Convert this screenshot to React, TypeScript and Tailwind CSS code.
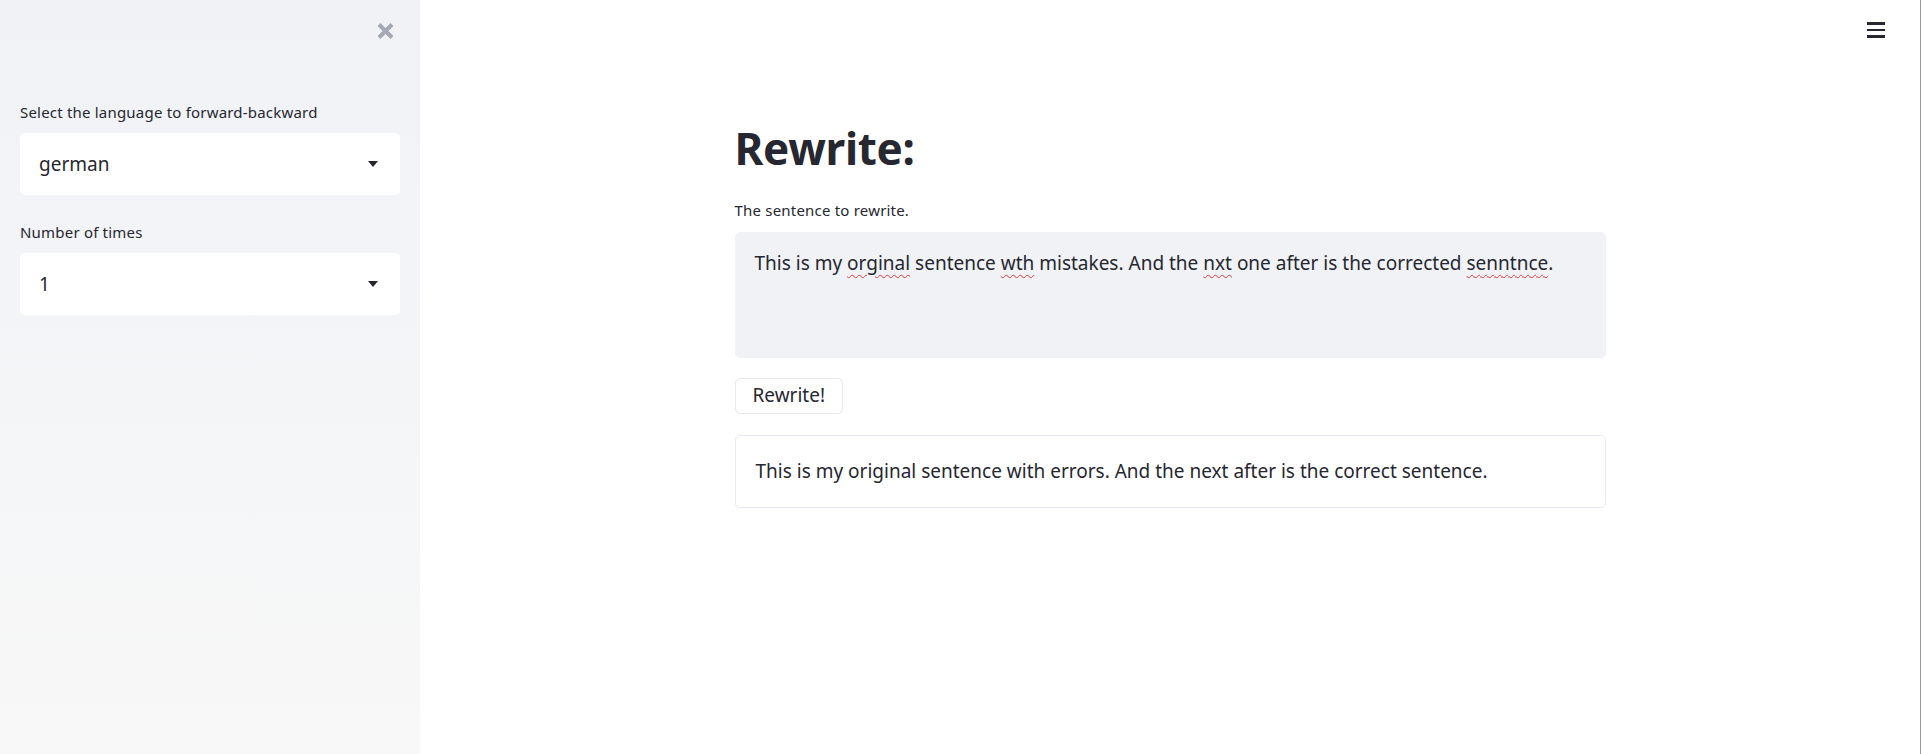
import React from "react";

const font = { fontFamily: '"Noto Sans", "Open Sans", sans-serif' };

function Caret() {
  return (
    <svg width="10" height="6" viewBox="0 0 10 6" className="shrink-0">
      <path d="M0 0h10L5 6z" fill="#262730" />
    </svg>
  );
}

function SelectBox({ label, value }: { label: string; value: string }) {
  return (
    <div className="flex flex-col">
      <label className="text-[15px] tracking-[0.2px] leading-5 text-[#262730] mb-[11px]">{label}</label>
      <div className="h-[62px] bg-white rounded-[5px] flex items-center justify-between pl-[19px] pr-[22px]">
        <span className="text-[19px] text-[#262730]">{value}</span>
        <Caret />
      </div>
    </div>
  );
}

function Typo({ children }: { children: React.ReactNode }) {
  return (
    <span className="underline decoration-wavy decoration-[#e53935] decoration-1 underline-offset-[4px]">
      {children}
    </span>
  );
}

export default function App() {
  return (
    <div className="flex w-full h-screen bg-white text-[#262730]" style={font}>
      {/* sidebar */}
      <aside className="w-[420px] shrink-0 h-full bg-linear-to-b from-[#f0f2f6] to-[#f8f8f8] px-5">
        <div className="flex justify-end pt-[22px] pr-[5px]">
          <svg width="19" height="18" viewBox="0 0 19 18">
            <path d="M3 2.5l13 13M16 2.5l-13 13" stroke="#a3a8b4" strokeWidth="4" strokeLinecap="butt" />
          </svg>
        </div>
        <div className="flex flex-col gap-[27px] mt-[62px]">
          <SelectBox label="Select the language to forward-backward" value="german" />
          <SelectBox label="Number of times" value="1" />
        </div>
      </aside>

      {/* main */}
      <main className="flex-1 h-full flex flex-col border-r border-[#9c9a96]">
        <div className="flex justify-end pt-[22px] pr-[35px]">
          <div className="w-[18px] flex flex-col gap-[4px]">
            <div className="h-[2.5px] bg-[#262730]" />
            <div className="h-[2.5px] bg-[#262730]" />
            <div className="h-[2.5px] bg-[#262730]" />
          </div>
        </div>
        <div className="w-[871px] mx-auto mt-[80px] flex flex-col">
          <h1 className="text-[44px] leading-[60px] font-bold text-[#262730] tracking-[-0.3px]">Rewrite:</h1>
          <label className="text-[15px] tracking-[0.2px] leading-5 mt-[22px] mb-[12px]">The sentence to rewrite.</label>
          <div className="h-[126px] bg-[#f0f2f6] rounded-[5px] px-5 pt-[17px] text-[19px] leading-7">
            This is my <Typo>orginal</Typo> sentence <Typo>wth</Typo> mistakes. And the <Typo>nxt</Typo> one after
            is the corrected <Typo>senntnce</Typo>.
          </div>
          <div className="mt-[20px]">
            <button className="h-[36px] px-[17px] bg-white border border-[#e6e9ef] rounded-[5px] text-[19px] text-[#262730]">
              Rewrite!
            </button>
          </div>
          <div className="mt-[21px] h-[73px] border border-[#e6e9ef] rounded-[5px] px-5 flex items-center text-[19px]">
            This is my original sentence with errors. And the next after is the correct sentence.
          </div>
        </div>
      </main>
    </div>
  );
}
